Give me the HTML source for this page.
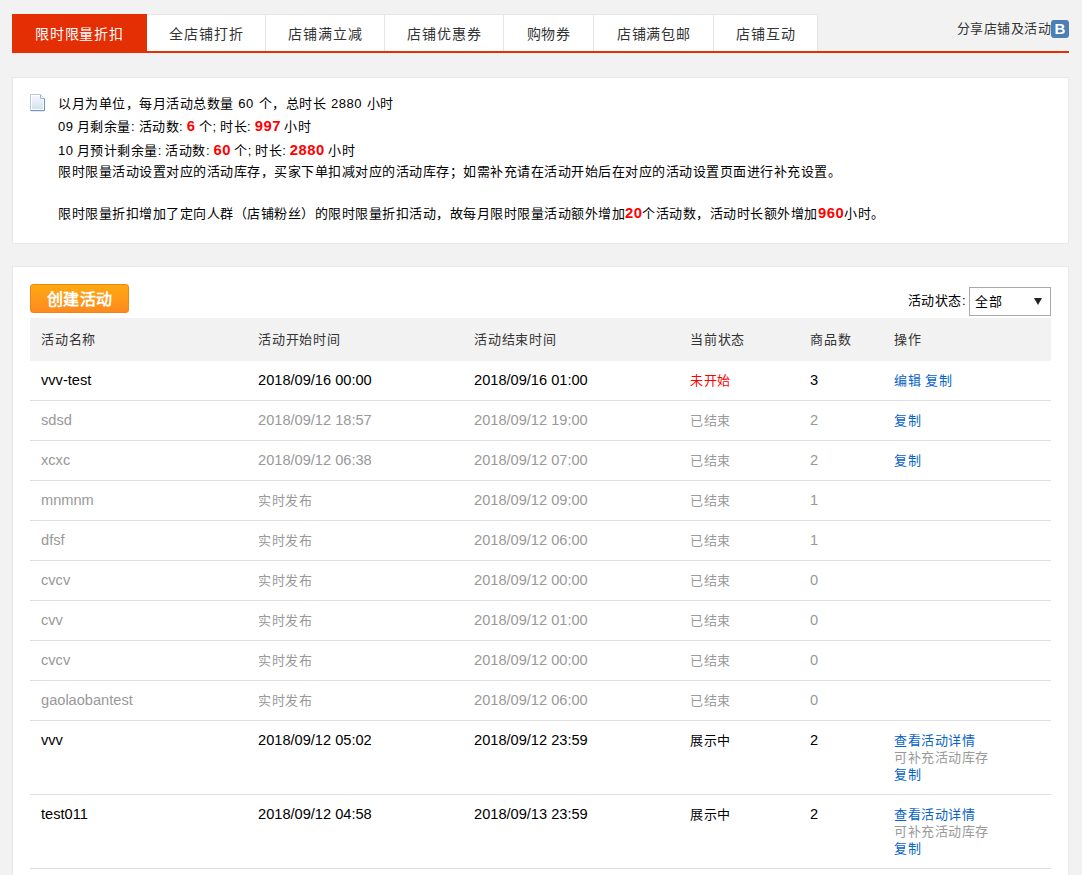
<!DOCTYPE html>
<html lang="zh-CN">
<head>
<meta charset="utf-8">
<title>限时限量折扣</title>
<style>
*{box-sizing:border-box;margin:0;padding:0}
html,body{width:1082px;height:875px;overflow:hidden;background:#f2f2f2;font-family:"Liberation Sans",sans-serif;font-size:13px;letter-spacing:0.5px;color:#000}
a{text-decoration:none;color:#0563c9}
.tabs{position:absolute;left:12px;top:14px;width:1057px;height:39px;border-bottom:2px solid #e42e04}
.tabs ul{list-style:none;display:flex;height:37px}
.tabs li{height:37px;line-height:39px;text-align:center;font-size:14px;letter-spacing:0.85px;text-indent:0.85px;color:#333;background:#fff;border-top:1px solid #e6e6e6;border-right:1px solid #e6e6e6}
.tabs li.on{background:#e42e04;color:#fff;border-color:#e42e04;height:39px}
.share{position:absolute;right:0;top:6px;height:18px;font-size:13px;color:#333;display:flex;align-items:center}
.share span{position:relative;top:-2px}
.share i{display:inline-block;width:18px;height:18px;background:#4b7fb6;border-radius:3px;color:#fff;font-style:normal;font-weight:bold;font-size:15px;letter-spacing:0;line-height:18px;text-align:center;margin-left:0}
.info{position:absolute;left:12px;top:77px;width:1057px;height:167px;background:#fff;border:1px solid #e8e8e8}
.info .ico{position:absolute;left:17px;top:16px}
.info p{position:absolute;left:45px;font-size:13px;line-height:18px;white-space:nowrap;color:#000}
.info b{color:#f00;font-size:14.8px}
.panel{position:absolute;left:12px;top:266px;width:1057px;height:620px;background:#fff;border:1px solid #e8e8e8}
.btn{position:absolute;left:17px;top:17px;width:99px;height:29px;border:1px solid #ee8517;border-radius:3px;background:linear-gradient(#ffa910,#ff8a20);color:#fff;font-weight:bold;font-size:16px;letter-spacing:.5px;line-height:27px;padding-top:1px;text-align:center}
.filter{position:absolute;right:17px;top:20px;height:29px;display:flex;align-items:center;font-size:13px}
.filter span{position:relative;top:-2px}
.sel{width:82px;height:29px;border:1px solid #a9a9a9;background:#fff;margin-left:3px;position:relative;line-height:27px;padding-left:5px;font-size:13px}
.sel:after{content:"";position:absolute;right:8px;top:10px;border-left:4px solid transparent;border-right:4px solid transparent;border-top:7px solid #222}
table{position:absolute;left:17px;top:51px;width:1021px;border-collapse:separate;border-spacing:0;table-layout:fixed}
th{height:43px;background:#f2f2f2;font-weight:normal;text-align:left;font-size:13px;letter-spacing:.8px;color:#333;padding-left:11px;padding-bottom:2px}
td{height:40px;border-bottom:1px solid #e0e0e0;font-size:14.625px;letter-spacing:0;padding-left:11px;vertical-align:top;padding-top:11px;line-height:17px}
tr.g td{color:#999}
td.red{color:#f00}
td .sub{font-size:13px;letter-spacing:.5px;line-height:17px}
td .gray{color:#999}
td.cn{font-size:13px;letter-spacing:.5px}
tr.tall td{height:74px}
</style>
</head>
<body>
<div class="tabs">
<ul>
<li class="on" style="width:135px">限时限量折扣</li>
<li style="width:119px">全店铺打折</li>
<li style="width:119px">店铺满立减</li>
<li style="width:119px">店铺优惠券</li>
<li style="width:90px">购物券</li>
<li style="width:120px">店铺满包邮</li>
<li style="width:104px">店铺互动</li>
</ul>
<div class="share"><span>分享店铺及活动</span><i>B</i></div>
</div>

<div class="info">
<svg class="ico" width="15" height="18" viewBox="0 0 15 18"><defs><linearGradient id="g1" x1="0" y1="0" x2="0" y2="1"><stop offset="0" stop-color="#f4f7fb"/><stop offset="1" stop-color="#d5e0ee"/></linearGradient></defs><path d="M0.5 0.5H10.5L14.5 4.5V16.5H0.5Z" fill="#fff" stroke="#b3c8e3"/><path d="M2 2H10V5H13V15H2Z" fill="url(#g1)"/><path d="M10.5 1V4.5H14" fill="none" stroke="#9bb5d9"/><path d="M11 1.2L13.8 4H11Z" fill="#fff"/><path d="M0.5 16.5H14.5V4.5" fill="none" stroke="#7094c6"/><path d="M1 17.5H14" stroke="#e3eaf4"/></svg>
<p style="top:17px;word-spacing:.75px">以月为单位，每月活动总数量 60 个，总时长 2880 小时</p>
<p style="top:39px;word-spacing:-.6px">09 月剩余量: 活动数: <b>6</b> 个; 时长: <b>997</b> 小时</p>
<p style="top:63px;word-spacing:-.7px">10 月预计剩余量: 活动数: <b>60</b> 个; 时长: <b>2880</b> 小时</p>
<p style="top:85px">限时限量活动设置对应的活动库存，买家下单扣减对应的活动库存；如需补充请在活动开始后在对应的活动设置页面进行补充设置。</p>
<p style="top:126px">限时限量折扣增加了定向人群（店铺粉丝）的限时限量折扣活动，故每月限时限量活动额外增加<b>20</b>个活动数，活动时长额外增加<b>960</b>小时。</p>
</div>

<div class="panel">
<div class="btn">创建活动</div>
<div class="filter"><span>活动状态:</span><div class="sel">全部</div></div>
<table>
<colgroup><col style="width:217px"><col style="width:216px"><col style="width:216px"><col style="width:120px"><col style="width:84px"><col></colgroup>
<tr><th>活动名称</th><th>活动开始时间</th><th>活动结束时间</th><th>当前状态</th><th>商品数</th><th>操作</th></tr>
<tr><td>vvv-test</td><td>2018/09/16 00:00</td><td>2018/09/16 01:00</td><td class="red cn">未开始</td><td>3</td><td class="cn"><a>编辑</a> <a>复制</a></td></tr>
<tr class="g"><td>sdsd</td><td>2018/09/12 18:57</td><td>2018/09/12 19:00</td><td class="cn">已结束</td><td>2</td><td class="cn"><a>复制</a></td></tr>
<tr class="g"><td>xcxc</td><td>2018/09/12 06:38</td><td>2018/09/12 07:00</td><td class="cn">已结束</td><td>2</td><td class="cn"><a>复制</a></td></tr>
<tr class="g"><td>mnmnm</td><td class="cn">实时发布</td><td>2018/09/12 09:00</td><td class="cn">已结束</td><td>1</td><td></td></tr>
<tr class="g"><td>dfsf</td><td class="cn">实时发布</td><td>2018/09/12 06:00</td><td class="cn">已结束</td><td>1</td><td></td></tr>
<tr class="g"><td>cvcv</td><td class="cn">实时发布</td><td>2018/09/12 00:00</td><td class="cn">已结束</td><td>0</td><td></td></tr>
<tr class="g"><td>cvv</td><td class="cn">实时发布</td><td>2018/09/12 01:00</td><td class="cn">已结束</td><td>0</td><td></td></tr>
<tr class="g"><td>cvcv</td><td class="cn">实时发布</td><td>2018/09/12 00:00</td><td class="cn">已结束</td><td>0</td><td></td></tr>
<tr class="g"><td>gaolaobantest</td><td class="cn">实时发布</td><td>2018/09/12 06:00</td><td class="cn">已结束</td><td>0</td><td></td></tr>
<tr class="tall"><td>vvv</td><td>2018/09/12 05:02</td><td>2018/09/12 23:59</td><td class="cn">展示中</td><td>2</td><td class="cn"><div class="sub"><a>查看活动详情</a></div><div class="sub gray">可补充活动库存</div><div class="sub"><a>复制</a></div></td></tr>
<tr class="tall"><td>test011</td><td>2018/09/12 04:58</td><td>2018/09/13 23:59</td><td class="cn">展示中</td><td>2</td><td class="cn"><div class="sub"><a>查看活动详情</a></div><div class="sub gray">可补充活动库存</div><div class="sub"><a>复制</a></div></td></tr>
</table>
</div>
</body>
</html>
